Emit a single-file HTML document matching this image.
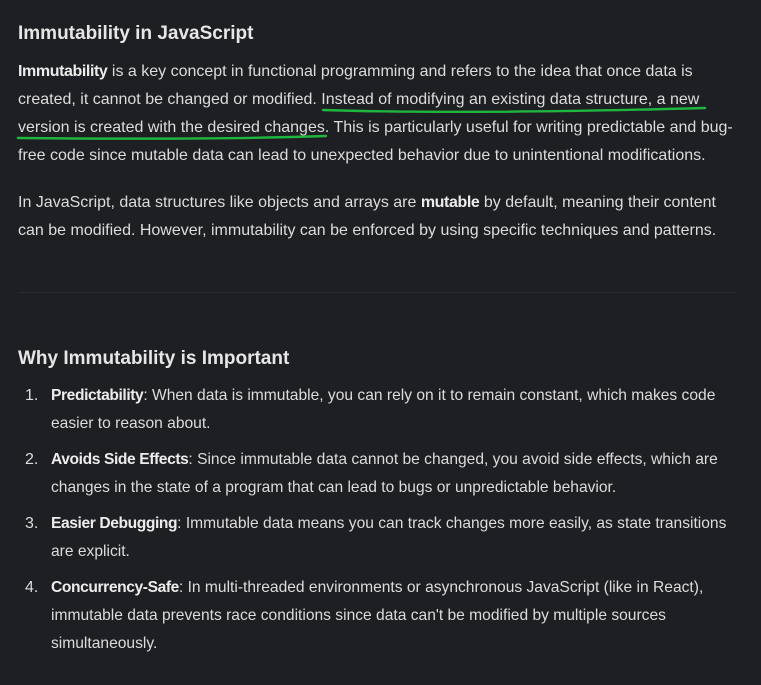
<!DOCTYPE html>
<html><head><meta charset="utf-8"><style>
html,body{margin:0;padding:0;background:#1e1f22;width:761px;height:685px;overflow:hidden}
body{font-family:"Liberation Sans","DejaVu Sans",sans-serif;color:#dcdcdc;font-size:16px;position:relative}
.l{position:absolute;white-space:nowrap;line-height:28px;height:28px}
.s{font-size:15.6px}
b{font-weight:bold;color:#ececec;letter-spacing:-0.4px}
h2{position:absolute;margin:0;font-size:19px;font-weight:bold;color:#e6e6e6;white-space:nowrap;line-height:28px}
.n{position:absolute;left:25px;line-height:28px}
</style></head><body>
<h2 style="left:18px;top:20px">Immutability in JavaScript</h2>
<div class="l" style="left:18px;top:58px"><b>Immutability</b> is a key concept in functional programming and refers to the idea that once data is</div>
<div class="l" style="left:18px;top:86px">created, it cannot be changed or modified. Instead of modifying an existing data structure, a new</div>
<div class="l" style="left:18px;top:114px">version is created with the desired changes. This is particularly useful for writing predictable and bug-</div>
<div class="l" style="left:18px;top:142px">free code since mutable data can lead to unexpected behavior due to unintentional modifications.</div>
<svg style="position:absolute;left:0;top:0" width="761" height="160"><path d="M323 110 C420 113 560 112 705 108" stroke="#1fb53f" stroke-width="2.4" fill="none" stroke-linecap="round"/><path d="M18 138 C120 139 240 139 326 136" stroke="#1fb53f" stroke-width="2.4" fill="none" stroke-linecap="round"/></svg>
<div class="l" style="left:18px;top:189px">In JavaScript, data structures like objects and arrays are <b>mutable</b> by default, meaning their content</div>
<div class="l" style="left:18px;top:217px">can be modified. However, immutability can be enforced by using specific techniques and patterns.</div>
<div style="position:absolute;left:18px;top:292px;width:718px;height:1px;background:#2a2b2e"></div>
<h2 style="left:18px;top:345px">Why Immutability is Important</h2>
<div class="n" style="top:382px">1.</div>
<div class="l s" style="left:51px;top:382px"><b>Predictability</b>: When data is immutable, you can rely on it to remain constant, which makes code</div>
<div class="l s" style="left:51px;top:410px">easier to reason about.</div>
<div class="n" style="top:446px">2.</div>
<div class="l s" style="left:51px;top:446px"><b>Avoids Side Effects</b>: Since immutable data cannot be changed, you avoid side effects, which are</div>
<div class="l s" style="left:51px;top:474px">changes in the state of a program that can lead to bugs or unpredictable behavior.</div>
<div class="n" style="top:510px">3.</div>
<div class="l s" style="left:51px;top:510px"><b>Easier Debugging</b>: Immutable data means you can track changes more easily, as state transitions</div>
<div class="l s" style="left:51px;top:538px">are explicit.</div>
<div class="n" style="top:574px">4.</div>
<div class="l s" style="left:51px;top:574px"><b>Concurrency-Safe</b>: In multi-threaded environments or asynchronous JavaScript (like in React),</div>
<div class="l s" style="left:51px;top:602px">immutable data prevents race conditions since data can't be modified by multiple sources</div>
<div class="l s" style="left:51px;top:630px">simultaneously.</div>
</body></html>
